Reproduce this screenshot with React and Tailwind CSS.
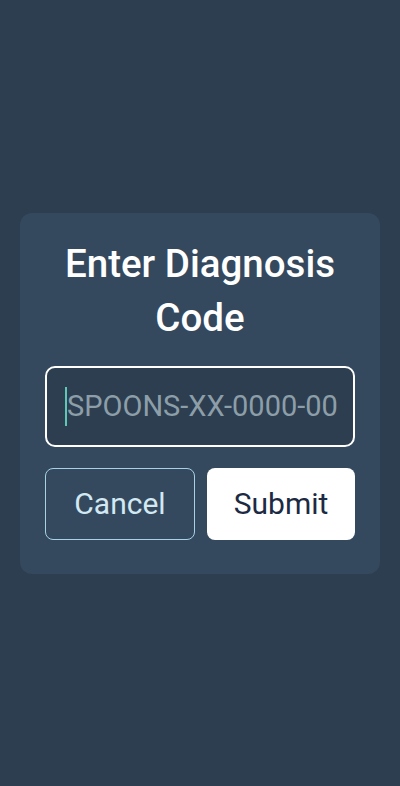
export default function App() {
  return (
    <div className="min-h-screen bg-[#2c3e50] flex items-center justify-center px-5 font-['Roboto',sans-serif]">
      <div className="w-full bg-[#34495e] rounded-xl px-[25px] pt-6 pb-[34px] flex flex-col">
        <h1 className="text-white text-[38.5px] leading-[54px] font-medium text-center">
          Enter Diagnosis Code
        </h1>
        <div className="mt-[21px] h-[81px] rounded-[10px] border-2 border-white bg-[#2c3e50] flex items-center pl-[18px]">
          <span className="w-[2px] h-[39px] bg-[#5ec8b4]" />
          <span className="text-[29px] text-[#8d9ea8] leading-none">
            SPOONS-XX-0000-00
          </span>
        </div>
        <div className="mt-[21px] flex gap-3">
          <button
            type="button"
            className="flex-1 h-[72px] rounded-lg border border-[#a6d3e3] text-[#d2e8f2] text-[30px]"
          >
            Cancel
          </button>
          <button
            type="button"
            className="flex-1 h-[72px] rounded-lg bg-white text-[#1c2a44] text-[30px]"
          >
            Submit
          </button>
        </div>
      </div>
    </div>
  );
}
